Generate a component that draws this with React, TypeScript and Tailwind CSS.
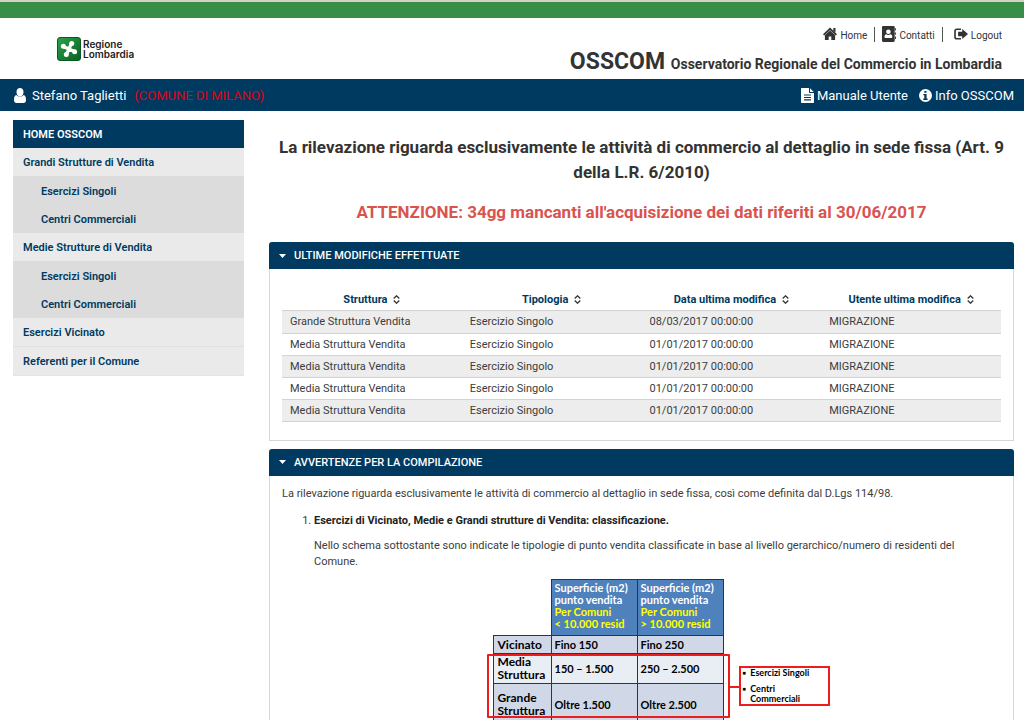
import type { ReactNode } from "react";

const recentChanges = [
  { struttura: "Grande Struttura Vendita", data: "08/03/2017 00:00:00" },
  { struttura: "Media Struttura Vendita", data: "01/01/2017 00:00:00" },
  { struttura: "Media Struttura Vendita", data: "01/01/2017 00:00:00" },
  { struttura: "Media Struttura Vendita", data: "01/01/2017 00:00:00" },
  { struttura: "Media Struttura Vendita", data: "01/01/2017 00:00:00" },
];

const columns = ["Struttura", "Tipologia", "Data ultima modifica", "Utente ultima modifica"];

function RegionLogo() {
  return (
    <svg viewBox="0 0 24 24" className="size-6" aria-hidden="true">
      <defs>
        <linearGradient id="logo-green" x1="0" y1="0" x2="1" y2="1">
          <stop offset="0" stopColor="#2fa04c" />
          <stop offset="1" stopColor="#04641f" />
        </linearGradient>
      </defs>
      <rect x="0.5" y="0.5" width="23" height="23" rx="2.5" fill="url(#logo-green)" stroke="#0a5a22" />
      <path
        d="M14.500 6.200 12 12 M6.200 9.600 12 12 M9.300 17.800 12 12 M17.800 14.600 12 12"
        stroke="#fff"
        strokeWidth="3.200"
        strokeLinecap="round"
      />
      <g fill="#fff">
        <circle cx="14.7" cy="6.4" r="2.5" />
        <circle cx="6.4" cy="9.3" r="2.5" />
        <circle cx="9.3" cy="17.6" r="2.5" />
        <circle cx="17.6" cy="14.7" r="2.5" />
      </g>
    </svg>
  );
}

function HomeIcon() {
  return (
    <svg viewBox="0 0 14 14" className="size-[14px]" fill="currentColor" aria-hidden="true">
      <path d="M7 .5 14 7.200l-1.200 1.200L7 3 1.200 8.400 0 7.200z M10.300 1h2.200v4.500L10.300 3.500z M7 3.600l5.100 4.700V13H8.300V9.400H5.700V13H1.900V8.300z" />
    </svg>
  );
}

function ContactIcon() {
  return (
    <svg viewBox="0 0 14 16" className="h-4 w-[14px]" fill="currentColor" aria-hidden="true">
      <path
        fillRule="evenodd"
        d="M1.2 0h10.300c.7 0 1.200.5 1.200 1.200v13.600c0 .7-.5 1.200-1.200 1.200H1.200C.5 16 0 15.500 0 14.800V1.200C0 .5.500 0 1.200 0z M6.400 3.500a2.300 2.300 0 1 0 0 4.600 2.300 2.300 0 0 0 0-4.600z M4.300 8.200C3.200 8.500 2.500 9.400 2.500 10.700c0 .8.400 1.300 1.100 1.300h5.600c.7 0 1.100-.5 1.100-1.300 0-1.300-.7-2.200-1.800-2.500-.6.500-1.300.8-2.100.8s-1.500-.3-2.100-.8z"
      />
      <path d="M13.100 2.200h.9v2.400h-.9z M13.100 6.400h.9v2.400h-.9z M13.100 10.600h.9V13h-.9z" />
    </svg>
  );
}

function LogoutIcon() {
  return (
    <svg viewBox="0 0 14 12" className="h-3 w-[14px]" fill="currentColor" aria-hidden="true">
      <path d="M7 .4v1.500H3c-.7 0-1.200.5-1.200 1.200v5.800c0 .7.500 1.200 1.200 1.200h4v1.500H2.700C1.200 11.600.2 10.600.2 9.200V2.800C.2 1.400 1.200.4 2.700.4z" />
      <path d="M8.200.9 14 6 8.200 11.100V8.200H4.100V3.800h4.100z" />
    </svg>
  );
}

function UserIcon() {
  return (
    <svg viewBox="0 0 12 15" className="h-[15px] w-3" fill="currentColor" aria-hidden="true">
      <path d="M6 0c2 0 3.500 1.600 3.500 3.900S8 8.600 6 8.600 2.500 6.200 2.500 3.900 4 0 6 0z" />
      <path d="M2.400 7C3.300 8.200 4.500 8.600 6 8.600s2.700-.4 3.600-1.600C11.300 7.400 12 9.200 12 12c0 1.900-.9 3-2.500 3h-7C.9 15 0 13.900 0 12c0-2.800.7-4.600 2.400-5z" />
    </svg>
  );
}

function FileIcon() {
  return (
    <svg viewBox="0 0 13 15" className="h-[15px] w-[13px]" fill="currentColor" aria-hidden="true">
      <path
        fillRule="evenodd"
        d="M1 0h7v5h5v9.200c0 .5-.3.800-.8.800H.8c-.5 0-.8-.3-.8-.8V1c0-.6.400-1 1-1z M3 6.500v1.100h7V6.500z M3 8.900V10h7V8.900z M3 11.300v1.100h7v-1.100z"
      />
      <path d="M9 .2 12.800 4H9z" />
    </svg>
  );
}

function InfoIcon() {
  return (
    <svg viewBox="0 0 13 13" className="size-[13px]" fill="currentColor" aria-hidden="true">
      <path
        fillRule="evenodd"
        d="M6.500 0a6.500 6.500 0 1 1 0 13 6.500 6.500 0 0 1 0-13z M5.300 1.900v1.900h2.200V1.900z M4.300 4.900v1.400h1v3.200h-1v1.400h4.300V9.500h-1V4.900z"
      />
    </svg>
  );
}

function SortIcon() {
  return (
    <svg viewBox="0 0 7 9" className="h-[9px] w-[7px]" fill="none" stroke="#333" strokeWidth="1.300" aria-hidden="true">
      <path d="M.7 3.500 3.500.8l2.800 2.700M.7 5.500l2.800 2.700 2.800-2.700" />
    </svg>
  );
}

function IconLink({ href, icon, children }: { href: string; icon: ReactNode; children: ReactNode }) {
  return (
    <a href={href} className="flex items-center gap-[3px]">
      {icon}
      <span className="pt-[2px]">{children}</span>
    </a>
  );
}

function Panel({ title, children }: { title: string; children: ReactNode }) {
  return (
    <section>
      <h2>
        <button
          type="button"
          aria-expanded="true"
          className="flex h-[27px] w-full items-center gap-2 rounded-t-[3px] bg-[#003a61] px-[10px] text-left text-[11px] font-medium text-white"
        >
          <svg viewBox="0 0 7 4" className="h-1 w-[7px]" fill="currentColor" aria-hidden="true">
            <path d="M0 0h7L3.500 4z" />
          </svg>
          <span className="pt-[2px]">{title}</span>
        </button>
      </h2>
      <div className="border border-t-0 border-[#d6d6d6]">{children}</div>
    </section>
  );
}

function Submenu() {
  return (
    <ul className="bg-[#dcdcdc] pt-px">
      <li>
        <a href="#singoli" className="block pl-7 pt-[2px] leading-[26px]">Esercizi Singoli</a>
      </li>
      <li>
        <a href="#centri" className="block pl-7 pt-[2px] leading-[26px]">Centri Commerciali</a>
      </li>
    </ul>
  );
}

function Sidebar() {
  return (
    <nav className="w-[231px] shrink-0 text-[11px] font-semibold text-[#003a61]">
      <a href="#home" className="block bg-[#003a61] pl-[10px] pt-[2px] leading-[26px] text-white">HOME OSSCOM</a>
      <ul className="bg-[#eaeaea]">
        <li>
          <a href="#grandi" className="block pl-[10px] pt-[2px] leading-[26px]">Grandi Strutture di Vendita</a>
          <Submenu />
        </li>
        <li>
          <a href="#medie" className="block pl-[10px] pt-[2px] leading-[26px]">Medie Strutture di Vendita</a>
          <Submenu />
        </li>
        <li>
          <a href="#vicinato" className="block border-b border-[#dfe1e2] pl-[10px] pt-[2px] leading-[26px]">Esercizi Vicinato</a>
        </li>
        <li>
          <a href="#referenti" className="block border-b border-[#e4e4e4] pl-[10px] pt-[2px] leading-[26px]">Referenti per il Comune</a>
        </li>
      </ul>
    </nav>
  );
}

function AreaHeading({ limit }: { limit: string }) {
  return (
    <th scope="col" className="h-14 border border-[#26364f] bg-[#4f81bd] pb-[2px] pl-[3px] text-left text-[11px] leading-3 text-white">
      Superficie (m2)
      <br />
      punto vendita
      <br />
      <span className="text-[#ffff00]">
        Per Comuni
        <br />
        {limit} 10.000 resid
      </span>
    </th>
  );
}

function Classification() {
  return (
    <div className="relative mx-auto mt-[9px] w-[330px] font-['Lato',sans-serif] text-black">
      <table className="w-[231px] table-fixed border-collapse text-left text-[11px] font-bold leading-[13px]">
        <colgroup>
          <col className="w-[58px]" />
          <col />
          <col />
        </colgroup>
        <thead>
          <tr>
            <td />
            <AreaHeading limit="<" />
            <AreaHeading limit=">" />
          </tr>
        </thead>
        <tbody className="[&_td]:border [&_td]:border-[#26364f] [&_td]:pl-[3px] [&_th]:border [&_th]:border-[#26364f] [&_th]:pl-1 [&_th]:text-[12px]">
          <tr className="h-[18px] bg-[#d0d8e8]">
            <th scope="row">Vicinato</th>
            <td>Fino 150</td>
            <td>Fino 250</td>
          </tr>
          <tr className="h-[30px] bg-[#e9edf4]">
            <th scope="row">Media Struttura</th>
            <td>150 – 1.500</td>
            <td>250 – 2.500</td>
          </tr>
          <tr className="h-[42px] bg-[#d0d8e8]">
            <th scope="row">Grande Struttura</th>
            <td>Oltre 1.500</td>
            <td>Oltre 2.500</td>
          </tr>
        </tbody>
      </table>
      <div className="absolute -left-[6px] top-[75px] h-[64px] w-[243px] rounded-[1px] border-2 border-[#ee1c1c]" />
      <div className="absolute left-[237px] top-[107px] h-[2px] w-[10px] bg-[#ee1c1c]" />
      <ul className="absolute left-[246px] top-[87px] w-[91px] border-2 border-[#ee1c1c] text-[9px] font-bold leading-[10px]">
        <li className="flex gap-1 pl-[2px]"><span>▪</span>Esercizi Singoli</li>
        <li className="mt-[6px] flex gap-1 pl-[2px]"><span>▪</span><span>Centri<br />Commerciali</span></li>
      </ul>
    </div>
  );
}

export default function App() {
  return (
    <div className="min-h-screen bg-white font-['Roboto',sans-serif] text-[11px] text-[#3c3c3c]">
      <div className="h-[18px] border-t-2 border-[#d5d1c3] bg-[#388e46]" />
      <header className="flex h-[61px] justify-between pl-[57px] pr-[22px]">
        <a href="#regione" className="mt-[19px] flex h-6 gap-[2px] font-['Inter',sans-serif] text-[10px] font-semibold leading-[10px] text-[#222]">
          <RegionLogo />
          <span className="pt-[2px]">Regione<br />Lombardia</span>
        </a>
        <div className="flex flex-col items-end">
          <nav className="mt-2 flex h-4 items-center text-[10px] text-[#333]">
            <IconLink href="#home" icon={<HomeIcon />}>Home</IconLink>
            <span className="mx-[7px] h-[15px] w-px bg-[#555]" />
            <IconLink href="#contatti" icon={<ContactIcon />}>Contatti</IconLink>
            <span className="ml-[7px] mr-[11px] h-[15px] w-px bg-[#555]" />
            <IconLink href="#logout" icon={<LogoutIcon />}>Logout</IconLink>
          </nav>
          <h1 className="mt-[5px] text-[23px] font-bold leading-[30px] text-[#333]">
            OSSCOM <span className="text-[14px]">Osservatorio Regionale del Commercio in Lombardia</span>
          </h1>
        </div>
      </header>
      <div className="flex h-8 items-center justify-between bg-[#003a61] pl-[14px] pr-[10px] text-[13px] text-white">
        <p className="flex items-center gap-[6px]">
          <UserIcon />
          <span className="pt-[2px]">Stefano Taglietti</span>
          <span className="ml-[2px] pt-[2px] text-[#e0000f]">(COMUNE DI MILANO)</span>
        </p>
        <nav className="flex items-center gap-[11px]">
          <IconLink href="#manuale" icon={<FileIcon />}>Manuale Utente</IconLink>
          <IconLink href="#info" icon={<InfoIcon />}>Info OSSCOM</IconLink>
        </nav>
      </div>

      <div className="flex gap-[25px] pl-[13px] pr-[10px] pt-[9px]">
        <Sidebar />
        <main className="min-w-0 flex-1">
          <p className="mt-[15px] text-center text-[17px] font-bold leading-[25px] text-[#333]">
            La rilevazione riguarda esclusivamente le attività di commercio al dettaglio in sede fissa (Art. 9 della L.R. 6/2010)
          </p>
          <p className="mb-[17px] mt-[15px] text-center text-[17px] font-bold leading-[25px] text-[#d9534f]">
            ATTENZIONE: 34gg mancanti all'acquisizione dei dati riferiti al 30/06/2017
          </p>
          <div className="flex flex-col gap-2">
            <Panel title="ULTIME MODIFICHE EFFETTUATE">
              <div className="px-3 pb-[18px] pt-5">
                <table className="w-full table-fixed border-collapse">
                  <thead>
                    <tr className="h-[21px] text-[#003a61]">
                      {columns.map((c) => (
                        <th key={c} scope="col" className="p-0 pt-px font-bold">
                          <button type="button" className="inline-flex items-center gap-[6px]">{c}<SortIcon /></button>
                        </th>
                      ))}
                    </tr>
                  </thead>
                  <tbody>
                    {recentChanges.map((row, i) => (
                      <tr key={i} className="h-[22px] border-y border-[#d3d3d3] first:h-[23px] odd:bg-[#ededed] [&>td]:pl-2 [&>td]:pt-[2px]">
                        <td>{row.struttura}</td>
                        <td>Esercizio Singolo</td>
                        <td>{row.data}</td>
                        <td>MIGRAZIONE</td>
                      </tr>
                    ))}
                  </tbody>
                </table>
              </div>
            </Panel>
            <Panel title="AVVERTENZE PER LA COMPILAZIONE">
              <div className="px-3 pt-[10px] leading-4">
                <p>La rilevazione riguarda esclusivamente le attività di commercio al dettaglio in sede fissa, così come definita dal D.Lgs 114/98.</p>
                <ol className="mt-[11px] list-decimal pl-8">
                  <li>
                    <p className="font-bold text-[#222]">Esercizi di Vicinato, Medie e Grandi strutture di Vendita: classificazione.</p>
                    <p className="mt-[9px] pr-3">
                      Nello schema sottostante sono indicate le tipologie di punto vendita classificate in base al livello gerarchico/numero di residenti del Comune.
                    </p>
                    <Classification />
                  </li>
                </ol>
              </div>
            </Panel>
          </div>
        </main>
      </div>
    </div>
  );
}
